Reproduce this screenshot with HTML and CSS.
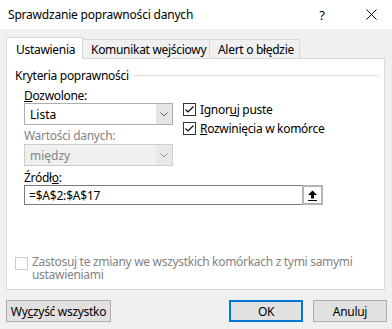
FILE: index.html
```html
<!DOCTYPE html>
<html lang="pl">
<head>
<meta charset="utf-8">
<link rel="stylesheet" href="styles.css">
</head>
<body>
<div class="window">
  <div class="titlebar">
    <span class="title">Sprawdzanie poprawności danych</span>
    <span class="help">?</span>
    <span class="close"><svg width="11" height="11" viewBox="0 0 11 11"><path d="M0.5 0.5L10.5 10.5M10.5 0.5L0.5 10.5" stroke="#000" stroke-width="1" fill="none"/></svg></span>
  </div>
  <div class="tabs">
    <div class="tab tab-active tab-1">Ustawienia</div>
    <div class="tab tab-2">Komunikat wejściowy</div>
    <div class="tab tab-3">Alert o błędzie</div>
  </div>
  <div class="panel">
    <div class="group-head"><span class="group-title">Kryteria poprawności</span><span class="rule"></span></div>
    <div class="criteria">
      <div class="col-left">
        <div class="label"><u>D</u>ozwolone:</div>
        <div class="select">
          <span class="select-text">Lista</span>
          <span class="select-btn"><svg width="8" height="5" viewBox="0 0 8 5"><path d="M0.5 0.5L4 4L7.5 0.5" stroke="#606060" fill="none"/></svg></span>
        </div>
        <div class="label label-disabled label-2">Wartości danych:</div>
        <div class="select select-disabled">
          <span class="select-text">między</span>
          <span class="select-btn"><svg width="8" height="5" viewBox="0 0 8 5"><path d="M0.5 0.5L4 4L7.5 0.5" stroke="#8a8a8a" fill="none"/></svg></span>
        </div>
      </div>
      <div class="col-right">
        <div class="check-row">
          <span class="box"><svg width="11" height="11" viewBox="0 0 11 11"><path d="M1.5 5.5L4 8L9.5 2.5" stroke="#000" stroke-width="1.1" fill="none"/></svg></span>
          <span class="check-label">Ignor<u>u</u>j puste</span>
        </div>
        <div class="check-row">
          <span class="box"><svg width="11" height="11" viewBox="0 0 11 11"><path d="M1.5 5.5L4 8L9.5 2.5" stroke="#000" stroke-width="1.1" fill="none"/></svg></span>
          <span class="check-label"><u>R</u>ozwinięcia w komórce</span>
        </div>
      </div>
    </div>
    <div class="source">
      <div class="label">Źródł<u>o</u>:</div>
      <div class="input-row">
        <div class="input">=$A$2:$A$17</div>
        <div class="ref-btn"><svg width="11" height="11" viewBox="0 0 11 11"><path d="M5.5 0.5L1 5L4 5L4 8.5L7 8.5L7 5L10 5Z" fill="#000"/><path d="M1 10.5H10" stroke="#000" stroke-width="1"/></svg></div>
      </div>
    </div>
    <div class="apply">
      <span class="box box-disabled"></span>
      <span class="apply-text">Zastosuj te zmiany we wszystkich komórkach z tymi samymi ustawieniami</span>
    </div>
  </div>
  <div class="buttons">
    <div class="btn btn-clear">Wy<u>c</u>zyść wszystko</div>
    <div class="spacer"></div>
    <div class="btn btn-ok">OK</div>
    <div class="btn btn-cancel">Anuluj</div>
  </div>
</div>
</body>
</html>
```
FILE: styles.css
```css
* { box-sizing: border-box; }
html, body {
  margin: 0;
  padding: 0;
}
body {
  width: 392px;
  height: 329px;
  overflow: hidden;
  background: #f0f0f0;
  font-family: "Noto Sans", "Liberation Sans", sans-serif;
  font-size: 12px;
  color: #000;
}
u { text-decoration: underline; text-underline-offset: 1px; }
.window {
  width: 392px;
  height: 329px;
  display: flex;
  flex-direction: column;
}
.titlebar {
  height: 29px;
  background: #fff;
  display: flex;
  align-items: center;
  padding-left: 8px;
}
.title {
  font-size: 12px;
  letter-spacing: -0.2px;
  flex: 1;
}
.help {
  width: 10px;
  text-align: center;
  margin-right: 39px;
  font-size: 13px;
}
.close {
  width: 11px;
  height: 11px;
  margin-right: 15px;
  display: flex;
}
.tabs {
  margin-top: 8px;
  height: 21px;
  padding-left: 6px;
  display: flex;
  align-items: flex-end;
  position: relative;
  z-index: 2;
}
.tab {
  height: 19px;
  border: 1px solid #d9d9d9;
  border-bottom: none;
  background: #f0f0f0;
  padding-left: 8px;
  line-height: 19px;
  white-space: nowrap;
  letter-spacing: -0.3px;
}
.tab-active {
  height: 22px;
  margin-bottom: -1px;
  background: #fff;
  padding-left: 9px;
  line-height: 20px;
  padding-top: 2px;
}
.tab-1 { width: 77px; }
.tab-2 { width: 127px; border-left: none; }
.tab-3 { width: 90px; border-left: none; }
.panel {
  margin-left: 6px;
  width: 379px;
  height: 232px;
  background: #fff;
  border: 1px solid #d9d9d9;
  display: flex;
  flex-direction: column;
}
.group-head {
  margin-top: 8px;
  height: 16px;
  padding-left: 8px;
  display: flex;
  align-items: center;
  letter-spacing: -0.3px;
}
.rule {
  flex: 1;
  height: 1px;
  background: #dcdcdc;
  margin-left: 4px;
  margin-right: 5px;
}
.criteria {
  display: flex;
  margin-left: 17px;
}
.col-left {
  width: 149px;
  display: flex;
  flex-direction: column;
}
.label {
  height: 16px;
  line-height: 17px;
  margin-top: 4px;
  letter-spacing: -0.3px;
}
.label-2 { margin-top: 2px; }
.label-disabled { color: #838383; }
.select {
  height: 22px;
  border: 1px solid #adadad;
  background: #fff;
  display: flex;
  align-items: stretch;
}
.select-text {
  flex: 1;
  padding-left: 5px;
  line-height: 21px;
}
.select-btn {
  width: 16px;
  background: #e5e5e5;
  display: flex;
  align-items: center;
  justify-content: center;
}
.select-disabled {
  margin-top: 1px;
  border-color: #cccccc;
  background: #f0f0f0;
  color: #838383;
}
.select-disabled .select-btn { background: #e8e8e8; }
.col-right {
  margin-left: 10px;
  margin-top: 18px;
  display: flex;
  flex-direction: column;
  gap: 3px;
}
.check-row {
  height: 16px;
  display: flex;
  align-items: center;
}
.box {
  width: 13px;
  height: 13px;
  border: 1px solid #333;
  background: #fff;
  display: flex;
  align-items: center;
  justify-content: center;
  flex: none;
}
.check-label {
  margin-left: 4px;
  letter-spacing: -0.3px;
  white-space: nowrap;
  line-height: 17px;
}
.source {
  margin-left: 17px;
  display: flex;
  flex-direction: column;
}
.source .label { margin-top: 3px; }
.input-row {
  display: flex;
  height: 20px;
}
.input {
  width: 279px;
  height: 20px;
  border: 1px solid #7a7a7a;
  line-height: 19px;
  padding-left: 4px;
  letter-spacing: -0.2px;
}
.ref-btn {
  width: 21px;
  height: 20px;
  margin-left: -1px;
  border: 2px solid #b4b4b4;
  background: #fff;
  display: flex;
  align-items: center;
  justify-content: center;
}
.apply {
  margin-top: 50px;
  margin-left: 8px;
  display: flex;
  align-items: flex-start;
}
.box-disabled {
  border-color: #cccccc;
  margin-top: 2px;
}
.apply-text {
  margin-left: 4px;
  width: 350px;
  color: #838383;
  line-height: 13px;
  letter-spacing: -0.3px;
}
.buttons {
  margin-top: 10px;
  padding-left: 6px;
  display: flex;
}
.btn {
  height: 22px;
  border: 1px solid #adadad;
  background: #e1e1e1;
  display: flex;
  align-items: center;
  justify-content: center;
  letter-spacing: -0.3px;
}
.btn-clear { width: 105px; }
.spacer { flex: 1; }
.btn-ok {
  width: 74px;
  border: 2px solid #0078d7;
}
.btn-cancel {
  width: 74px;
  margin-left: 10px;
  margin-right: 5px;
}
```
